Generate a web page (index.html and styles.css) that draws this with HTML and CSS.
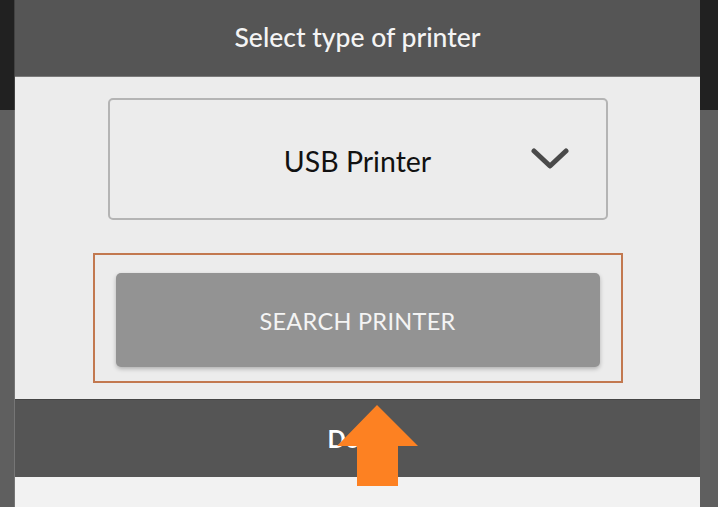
FILE: index.html
```html
<!DOCTYPE html>
<html>
<head>
<meta charset="utf-8">
<link rel="stylesheet" href="styles.css">
</head>
<body>
<div class="page">
  <div class="topbar"></div>
  <div class="rest"></div>
</div>
<div class="modal">
  <div class="modal-header">Select type of printer</div>
  <div class="modal-body">
    <div class="select">
      <span class="select-text">USB Printer</span>
      <svg class="chevron" width="38" height="24" viewBox="0 0 38 24"><path d="M3 4 L19 19 L35 4" fill="none" stroke="#4a4a4a" stroke-width="5" stroke-linejoin="round" stroke-linecap="round"/></svg>
    </div>
    <div class="highlight">
      <div class="search-btn">SEARCH PRINTER</div>
    </div>
  </div>
  <div class="modal-footer">Done</div>
  <div class="modal-bottom"></div>
</div>
<svg class="arrow" width="82" height="82" viewBox="0 0 82 82"><polygon points="40,0 81,41 61,41 61,81 20,81 20,41 0,41" fill="#fd8122"/></svg>
</body>
</html>
```
FILE: styles.css
```css
html, body { margin: 0; padding: 0; }
body { width: 718px; height: 507px; overflow: hidden; font-family: "Lato", "Liberation Sans", sans-serif; position: relative; }
.page { display: flex; flex-direction: column; height: 507px; }
.topbar { height: 110px; background: #212121; }
.rest { flex: 1; background: #5f5f5f; }
.modal { position: absolute; left: 15px; top: 0; width: 685px; height: 507px; display: flex; flex-direction: column; background: #ececec; box-shadow: -1px 0 0 rgba(255,255,255,0.15); }
.modal-header { height: 77px; background: #555555; color: #f4f4f4; font-size: 26.5px; font-weight: 500; display: flex; align-items: center; justify-content: center; padding-bottom: 2px; box-sizing: border-box; border-bottom: 1px solid #7a7a7a; }
.modal-body { padding: 21px 0 16px 0; display: flex; flex-direction: column; align-items: center; }
.select { width: 496px; height: 118px; border: 2px solid #b4b4b4; border-radius: 5px; position: relative; display: flex; align-items: center; justify-content: center; box-sizing: content-box; }
.select-text { font-size: 28.5px; color: #111; padding-top: 4px; }
.chevron { position: absolute; right: 37px; top: 47px; }
.highlight { margin-top: 33px; width: 526px; height: 126px; border: 2px solid #c2784f; display: flex; align-items: center; justify-content: center; }
.search-btn { margin-top: 4px; width: 484px; height: 94px; background: #939393; border-radius: 5px; box-shadow: 0 2px 4px rgba(0,0,0,0.25); color: #f4f4f4; font-size: 23.5px; display: flex; align-items: center; justify-content: center; letter-spacing: 0.3px; padding-top: 2px; box-sizing: border-box; }
.modal-footer { height: 78px; background: #555555; border-top: 1px solid #444; box-sizing: border-box; color: #fff; font-size: 24px; font-weight: bold; display: flex; align-items: center; justify-content: center; padding-right: 2px; }
.modal-bottom { flex: 1; background: #f2f2f2; }
.arrow { position: absolute; left: 337px; top: 405px; }
```
